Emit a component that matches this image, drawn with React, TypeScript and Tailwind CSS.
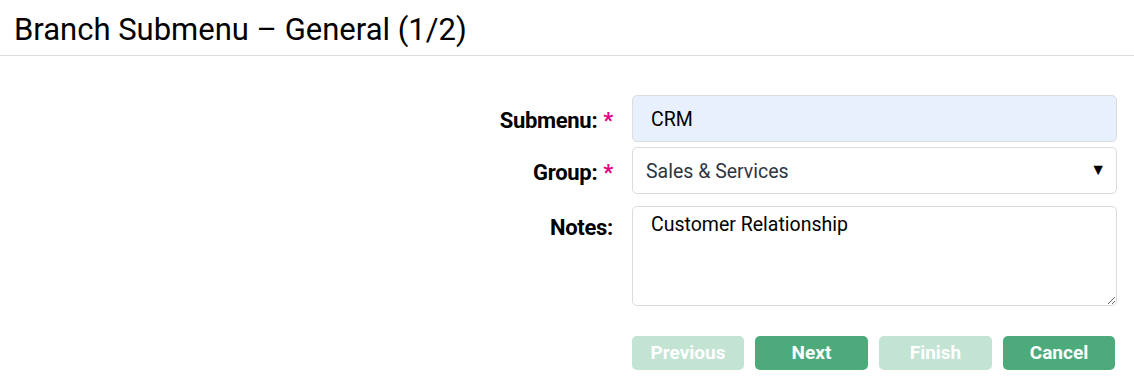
import { useState } from "react";

const FONT = "font-['Roboto','Liberation_Sans',sans-serif]";

function Required() {
  return <span className="ml-[6px] text-[#e6007e]">*</span>;
}

export default function App() {
  const [submenu, setSubmenu] = useState("CRM");
  const [group, setGroup] = useState("Sales & Services");
  const [notes, setNotes] = useState("Customer Relationship");

  return (
    <div className={`min-h-screen w-full bg-white text-black ${FONT}`}>
      <header className="h-[56px] border-b border-[#dddddd] px-[14px] pt-[12px]">
        <h1 className="text-[31px] leading-[36px] font-normal">
          Branch Submenu – General (1/2)
        </h1>
      </header>

      <form
        className="grid grid-cols-[1fr_485px] gap-x-[19px] pr-[17px] pt-[39px]"
        onSubmit={(e) => e.preventDefault()}
      >
        {/* Submenu */}
        <label className="flex h-[47px] items-center justify-end pt-[3px] text-[22px] font-bold tracking-[-0.3px]">
          Submenu:
          <Required />
        </label>
        <input
          value={submenu}
          onChange={(e) => setSubmenu(e.target.value)}
          className="h-[47px] rounded-[5px] border border-[#dcdcdc] bg-[#e8f0fe] px-[18px] pt-[2px] text-[19.5px] text-black outline-none"
        />

        {/* Group */}
        <label className="mt-[5px] flex h-[47px] items-center justify-end pt-[3px] text-[22px] font-bold tracking-[-0.3px]">
          Group:
          <Required />
        </label>
        <div className="relative mt-[5px] h-[47px]">
          <select
            value={group}
            onChange={(e) => setGroup(e.target.value)}
            className="h-full w-full appearance-none rounded-[5px] border border-[#dcdcdc] bg-white px-[13px] pt-[2px] text-[19.5px] text-[#2f3542] outline-none"
          >
            <option>Sales & Services</option>
            <option>Finance</option>
            <option>Operations</option>
          </select>
          <span className="pointer-events-none absolute right-[11px] top-[11px] text-[16px] text-black">
            ▼
          </span>
        </div>

        {/* Notes */}
        <label className="mt-[12px] flex justify-end pt-[5px] text-[22px] font-bold tracking-[-0.3px]">
          Notes:
        </label>
        <textarea
          value={notes}
          onChange={(e) => setNotes(e.target.value)}
          className="mt-[12px] h-[100px] rounded-[5px] border border-[#dcdcdc] bg-white px-[18px] pt-[3px] pb-[6px] text-[19.5px] text-black outline-none"
        />

        {/* Actions */}
        <div />
        <div className="mt-[30px] flex gap-[11px]">
          <button type="button" disabled className="h-[34px] w-[112px] rounded-[5px] bg-[#c3e3d3] text-[19px] font-bold text-white">
            Previous
          </button>
          <button type="button" className="h-[34px] w-[113px] rounded-[5px] bg-[#4caa7b] text-[19px] font-bold text-white">
            Next
          </button>
          <button type="button" disabled className="h-[34px] w-[113px] rounded-[5px] bg-[#c3e3d3] text-[19px] font-bold text-white">
            Finish
          </button>
          <button type="submit" className="h-[34px] w-[112px] rounded-[5px] bg-[#4caa7b] text-[19px] font-bold text-white">
            Cancel
          </button>
        </div>
      </form>
    </div>
  );
}
